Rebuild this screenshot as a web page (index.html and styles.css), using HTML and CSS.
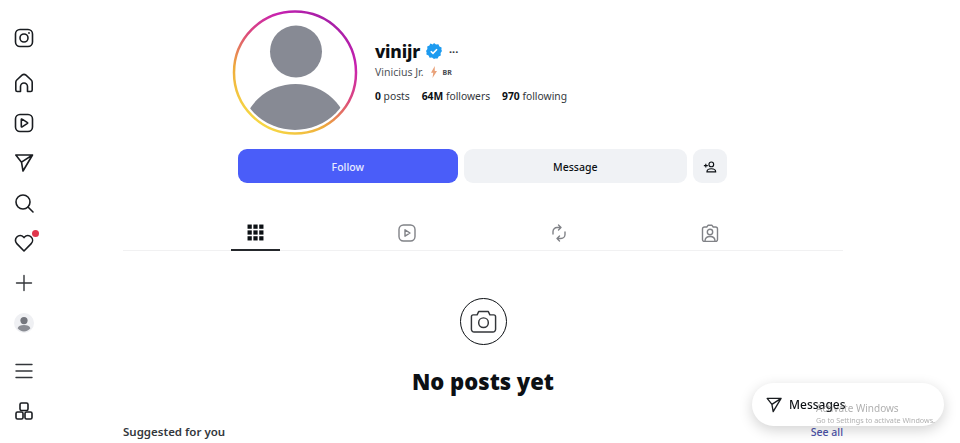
FILE: index.html
```html
<!DOCTYPE html>
<html lang="en">
<head>
    <meta charset="UTF-8">
    <meta name="viewport" content="width=device-width, initial-scale=1.0">
    <title>vinijr</title>
    <link rel="stylesheet" href="styles.css">
</head>
<body>
    <aside class="sidebar">
        <svg class="nav-icon logo" viewBox="0 0 24 24"><rect x="3.500" y="3.500" width="17" height="17" rx="4.500"/><circle cx="12" cy="12" r="4"/><circle cx="17" cy="7" r="0.900" class="dot"/></svg>
        <svg class="nav-icon" viewBox="0 0 24 24"><path d="M3.800 19V11.200a3 3 0 0 1 1-2.200L10 4.200a3 3 0 0 1 4 0L19.200 9a3 3 0 0 1 1 2.200V19a1.500 1.500 0 0 1-1.500 1.500H15.500V15.500a3.500 3.500 0 0 0-7 0V20.500H5.300A1.500 1.500 0 0 1 3.800 19z"/></svg>
        <svg class="nav-icon" viewBox="0 0 24 24"><rect x="3.500" y="3.500" width="17" height="17" rx="4.500"/><path d="M9.300 8.500a.5.5 0 0 1 .8-.4l5.400 3.500a.5.5 0 0 1 0 .8l-5.400 3.500a.5.5 0 0 1-.8-.4z"/></svg>
        <svg class="nav-icon" viewBox="0 0 24 24"><path d="M20.500 4H3.800L9.500 11.200 11 20zM9.500 11.200L20.500 4"/></svg>
        <svg class="nav-icon" viewBox="0 0 24 24"><circle cx="11" cy="11" r="7"/><path d="M16 16l5 5"/></svg>
        <div class="heart-wrap">
            <svg class="nav-icon" viewBox="0 0 24 24"><path d="M12 20l-7.200-7.400a4.700 4.700 0 0 1 6.700-6.600l.5.600.5-.6a4.700 4.700 0 0 1 6.700 6.600z"/></svg>
            <span class="red-dot"></span>
        </div>
        <svg class="nav-icon thin" viewBox="0 0 24 24"><path d="M12 4.500v15M4.500 12h15"/></svg>
        <svg class="nav-avatar" viewBox="0 0 20 20"><circle cx="10" cy="10" r="10" fill="#eff0f3"/><circle cx="10" cy="7.600" r="3.600" fill="#74767d"/><path d="M3.600 15.200a6.600 4.200 0 0 1 12.800 0 8 8 0 0 1-12.800 0z" fill="#8a8c93"/></svg>
        <svg class="nav-icon thin menu" viewBox="0 0 24 24"><path d="M4 5.500h16M4 12h16M4 18.500h16"/></svg>
        <svg class="nav-icon" viewBox="0 0 24 24"><rect x="8" y="4" width="8" height="7.500" rx="1.500"/><rect x="4" y="13" width="7" height="7" rx="1.500"/><rect x="13" y="13" width="7" height="7" rx="1.500"/></svg>
    </aside>

    <main class="content">
        <section class="profile">
            <svg class="avatar" viewBox="0 0 126 126">
                <defs>
                    <linearGradient id="ring" x1="0.2" y1="0.95" x2="0.8" y2="0.05">
                        <stop offset="0" stop-color="#f7dc45"/>
                        <stop offset="0.28" stop-color="#eeaa3c"/>
                        <stop offset="0.55" stop-color="#dc4a7c"/>
                        <stop offset="0.8" stop-color="#c821b0"/>
                        <stop offset="1" stop-color="#a21ea6"/>
                    </linearGradient>
                    <clipPath id="inner"><circle cx="63" cy="62.500" r="57.500"/></clipPath>
                </defs>
                <circle cx="63" cy="62.500" r="61" fill="none" stroke="url(#ring)" stroke-width="2.500"/>
                <circle cx="64" cy="41.500" r="26" fill="#878a94"/>
                <ellipse cx="63.500" cy="124" rx="53" ry="50" fill="#878a94" clip-path="url(#inner)"/>
            </svg>
            <div class="info">
                <div class="name-row">
                    <span class="username">vinijr</span>
                    <svg class="verified" viewBox="0 0 16 16"><path d="M8 0l2 1.400 2.400-.2 1 2.200 2.200 1-.2 2.400L16 8l-1.400 2 .2 2.400-2.200 1-1 2.200-2.400-.2L8 16l-2-1.400-2.400.2-1-2.200-2.200-1 .2-2.400L0 8l1.400-2-.2-2.400 2.200-1 1-2.200L6.800 1.400z" fill="#1d9bf0"/><path d="M4.800 8.200l2.200 2.200 4-4.200" fill="none" stroke="#fff" stroke-width="1.600"/></svg>
                    <span class="more">···</span>
                </div>
                <div class="full-name">
                    <span>Vinicius Jr.</span>
                    <svg class="bolt" viewBox="0 0 10 16"><path d="M6 0L1 9h3l-1 7 6-9.500H6z" fill="#e9a27a"/></svg>
                    <span class="country">BR</span>
                </div>
                <div class="stats">
                    <span><b>0</b> posts</span>
                    <span><b>64M</b> followers</span>
                    <span><b>970</b> following</span>
                </div>
            </div>
        </section>

        <div class="actions">
            <button class="btn btn-follow">Follow</button>
            <button class="btn btn-message">Message</button>
            <button class="btn btn-add">
                <svg viewBox="0 0 16 16" width="14" height="14"><circle cx="9.500" cy="5" r="2.700"/><path d="M4.500 13.500c0-2.500 2-3.500 5-3.500s5 1 5 3.500zM1 6.500h4.500M3.200 4.200v4.500"/></svg>
            </button>
        </div>

        <nav class="tabs">
            <div class="tab active">
                <svg viewBox="0 0 16 16" width="17" height="17" class="grid-icon"><rect x="0.500" y="0.500" width="4" height="4"/><rect x="6" y="0.500" width="4" height="4"/><rect x="11.500" y="0.500" width="4" height="4"/><rect x="0.500" y="6" width="4" height="4"/><rect x="6" y="6" width="4" height="4"/><rect x="11.500" y="6" width="4" height="4"/><rect x="0.500" y="11.500" width="4" height="4"/><rect x="6" y="11.500" width="4" height="4"/><rect x="11.500" y="11.500" width="4" height="4"/></svg>
            </div>
            <div class="tab">
                <svg viewBox="0 0 18 18" width="18" height="18"><rect x="1" y="1" width="16" height="16" rx="4.500"/><path d="M7 5.800l5 3.200-5 3.200z"/></svg>
            </div>
            <div class="tab">
                <svg viewBox="0 0 18 18" width="18" height="18"><path d="M3 10V7.500a4 4 0 0 1 4-4h4M8.500 1L11 3.500 8.500 6M15 8v2.500a4 4 0 0 1-4 4H7M9.500 12L7 14.500 9.500 17"/></svg>
            </div>
            <div class="tab">
                <svg viewBox="0 0 18 18" width="18" height="18"><path d="M3.500 3h2.300l1.200-1.700h4L12.200 3h2.300A2 2 0 0 1 16.500 5v10.500a2 2 0 0 1-2 2h-11a2 2 0 0 1-2-2V5a2 2 0 0 1 2-2z"/><circle cx="9" cy="8" r="2.700"/><path d="M4 17c0-3 2-4.500 5-4.500s5 1.500 5 4.500"/></svg>
            </div>
        </nav>

        <section class="empty">
            <div class="camera">
                <svg viewBox="0 0 24 24" width="29" height="29"><path d="M3.500 6.500h3.200L8 3.800h8l1.300 2.700h3.200a1.500 1.500 0 0 1 1.500 1.500v10.500a2.200 2.200 0 0 1-2.200 2.200H4.200A2.200 2.200 0 0 1 2 18.500V8a1.500 1.500 0 0 1 1.500-1.500z"/><circle cx="12" cy="13" r="4"/></svg>
            </div>
            <h1>No posts yet</h1>
        </section>

        <div class="suggested">
            <span class="suggested-title">Suggested for you</span>
            <a class="see-all">See all</a>
        </div>
    </main>

    <div class="messages-pill">
        <svg class="nav-icon" viewBox="0 0 24 24"><path d="M20.500 4H3.800L9.500 11.200 11 20zM9.500 11.200L20.500 4"/></svg>
        <span>Messages</span>
    </div>

    <div class="watermark">
        <div class="wm-title">Activate Windows</div>
        <div class="wm-sub">Go to Settings to activate Windows.</div>
    </div>
</body>
</html>
```

FILE: styles.css
```css
* {
    box-sizing: border-box;
}

html, body {
    height: 100%;
}

body {
    margin: 0;
    background: #fff;
    color: #0c1014;
    font-family: 'Noto Sans', 'Open Sans', sans-serif;
    display: flex;
    overflow: hidden;
}

/* left rail */
.sidebar {
    width: 48px;
    flex-shrink: 0;
    padding-top: 26px;
    display: flex;
    flex-direction: column;
    align-items: center;
    gap: 16px;
}

.nav-icon {
    width: 24px;
    height: 24px;
    display: block;
    fill: none;
    stroke: #1a1d21;
    stroke-width: 1.600;
    stroke-linejoin: round;
    stroke-linecap: round;
    flex-shrink: 0;
}

.nav-icon.thin {
    stroke: #33363a;
    stroke-width: 1.400;
}

.nav-icon .dot {
    fill: #1a1d21;
    stroke: none;
}

.logo {
    margin-bottom: 5px;
}

.heart-wrap {
    position: relative;
    width: 24px;
    height: 24px;
}

.red-dot {
    position: absolute;
    top: -1px;
    right: -3px;
    width: 7px;
    height: 7px;
    border-radius: 50%;
    background: #e0364c;
}

.nav-avatar {
    width: 20px;
    height: 20px;
    margin: 2px 0;
}

.menu {
    margin-top: 8px;
}

/* main column */
.content {
    width: 720px;
    margin-left: 75px;
    flex-shrink: 0;
}

.profile {
    display: flex;
    padding: 10px 0 0 109px;
    height: 149px;
}

.avatar {
    width: 126px;
    height: 126px;
    flex-shrink: 0;
    overflow: visible;
}

.info {
    margin-left: 17px;
    padding-top: 30px;
}

.name-row {
    display: flex;
    align-items: center;
    height: 22px;
}

.username {
    font-size: 17.500px;
    font-weight: 800;
    line-height: 22px;
    letter-spacing: -0.200px;
}

.verified {
    width: 16px;
    height: 16px;
    margin-left: 6px;
}

.more {
    margin-left: 7px;
    font-size: 11px;
    font-weight: 700;
    color: #33363b;
}

.full-name {
    margin-top: 1px;
    display: flex;
    align-items: center;
    height: 18px;
    font-size: 10.500px;
    color: #4f5359;
}

.bolt {
    width: 8px;
    height: 12px;
    margin-left: 6px;
}

.country {
    margin-left: 5px;
    font-size: 7px;
    font-weight: 700;
    color: #44484e;
}

.stats {
    margin-top: 7px;
    display: flex;
    gap: 12px;
    font-size: 10.300px;
    line-height: 16px;
    color: #33373c;
}

.stats b {
    color: #0c1014;
    font-weight: 700;
}

.actions {
    margin-left: 115px;
    width: 489.500px;
    display: flex;
    gap: 6px;
}

.btn {
    height: 34px;
    border: none;
    border-radius: 9px;
    font-family: inherit;
    font-size: 10.500px;
    font-weight: 500;
    padding: 1px 0 0;
}

.btn-follow {
    width: 219.500px;
    background: #4a5df9;
    color: #e9ecff;
}

.btn-message {
    width: 223.500px;
    background: #f0f2f5;
    color: #0c1014;
}

.btn-add {
    width: 34px;
    background: #f0f2f5;
    display: flex;
    align-items: center;
    justify-content: center;
}

.btn-add svg {
    fill: none;
    stroke: #0c1014;
    stroke-width: 1.300;
}

.tabs {
    margin-top: 27px;
    height: 41px;
    padding: 0 57px;
    display: flex;
    border-bottom: 1px solid #f1f1f2;
}

.tab {
    flex: 1;
    display: flex;
    justify-content: center;
    align-items: center;
    height: 41px;
    padding-top: 5px;
}

.tab svg {
    fill: none;
    stroke: #808287;
    stroke-width: 1.400;
    stroke-linejoin: round;
    stroke-linecap: round;
}

.tab.active {
    flex: 0 0 49px;
    margin: 0 51px;
    border-bottom: 2px solid #25282c;
}

.tab svg.grid-icon {
    fill: #0c1014;
    stroke: none;
}

.empty {
    margin-top: 47px;
    display: flex;
    flex-direction: column;
    align-items: center;
}

.camera {
    width: 47px;
    height: 47px;
    border: 1px solid #0c1014;
    border-radius: 50%;
    display: flex;
    align-items: center;
    justify-content: center;
}

.camera svg {
    fill: none;
    stroke: #33363a;
    stroke-width: 1.200;
    stroke-linejoin: round;
}

.empty h1 {
    margin: 20px 0 0;
    font-size: 22px;
    font-weight: 900;
    line-height: 32px;
}

.suggested {
    margin-top: 27px;
    display: flex;
    justify-content: space-between;
    font-size: 11.500px;
    font-weight: 600;
    line-height: 16px;
}

.suggested-title {
    color: #33373c;
}

.see-all {
    color: #4b52a8;
    font-size: 10.500px;
    font-weight: 500;
}

/* floating stuff */
.messages-pill {
    position: fixed;
    left: 752px;
    top: 383px;
    width: 192px;
    height: 43px;
    padding-left: 12px;
    border-radius: 22px;
    background: #fff;
    box-shadow: 0 4px 14px rgba(0, 0, 0, 0.18);
    display: flex;
    align-items: center;
    gap: 5px;
    font-size: 12px;
    font-weight: 500;
}

.messages-pill .nav-icon {
    width: 20px;
    height: 20px;
}

.watermark {
    position: fixed;
    left: 816px;
    top: 402px;
    color: rgba(110, 110, 110, 0.55);
    pointer-events: none;
}

.wm-title {
    font-size: 10px;
    line-height: 13px;
}

.wm-sub {
    font-size: 7.200px;
    line-height: 10px;
}
```
